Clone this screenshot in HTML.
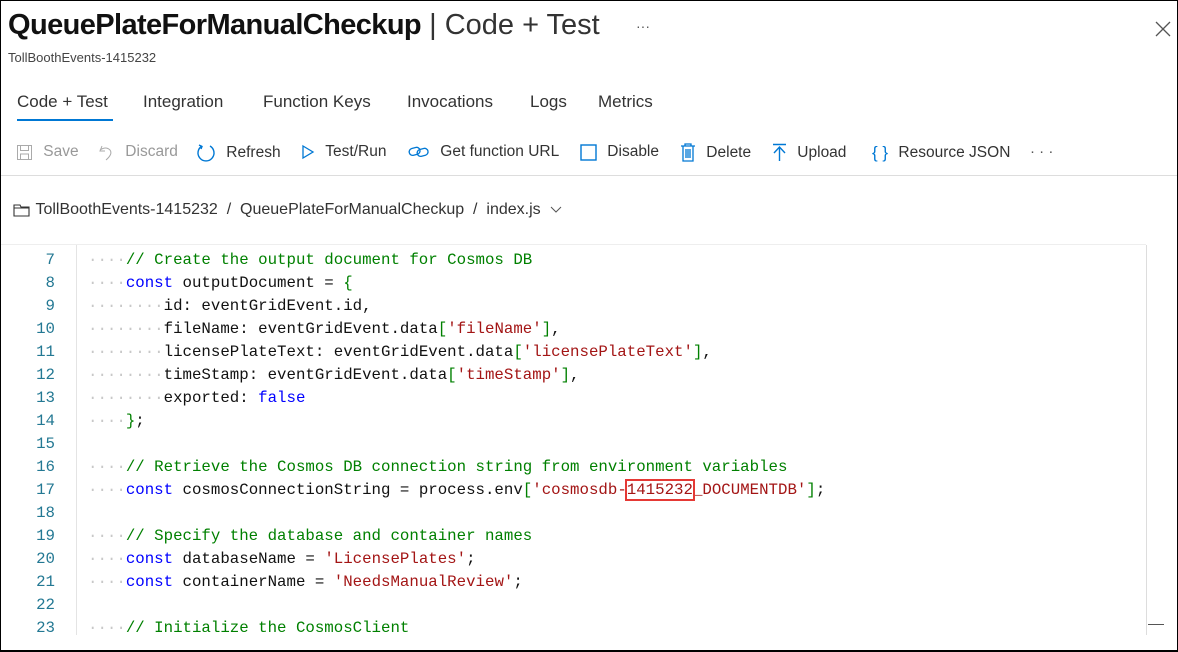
<!DOCTYPE html>
<html><head><meta charset="utf-8"><style>
*{margin:0;padding:0;box-sizing:border-box}
body{width:1178px;height:652px;overflow:hidden;background:#fff;font-family:"Liberation Sans",sans-serif;color:#222;position:relative}
.frame{position:absolute;left:0;top:0;width:1178px;height:652px;border:1px solid #000;border-bottom:2px solid #000}
.abs{position:absolute;white-space:nowrap}
.title{left:8px;top:9px;font-size:29px;letter-spacing:-0.6px}
.title b{font-weight:bold;color:#111}
.title span{font-weight:normal;color:#333;letter-spacing:0}
.sub{left:8px;top:50px;font-size:13px;color:#444}
.tabs{top:92px;font-size:17px;color:#333}
.tb{top:143px;font-size:15.5px;color:#333;display:flex;align-items:center;gap:6px}
.dis{color:#999}
.ico{color:#0078d4}
.code{font-family:"Liberation Mono",monospace;font-size:15.75px;position:absolute;left:88px;white-space:pre;line-height:23px;color:#111}
.ln{font-family:"Liberation Mono",monospace;font-size:15.75px;position:absolute;right:1123px;line-height:23px;color:#237893;text-align:right}
.d{color:#c8c8c8}
.c{color:#008000}
.k{color:#0000ff}
.s{color:#a31515}
</style></head><body>
<div class="abs title"><b>QueuePlateForManualCheckup</b><span> | Code + Test</span></div>
<div class="abs" style="left:636px;top:18px;font-size:14px;color:#555">···</div>
<svg class="abs" style="left:1155px;top:21px" width="16" height="16"><path d="M1 1L15 15M15 1L1 15" stroke="#555" stroke-width="1.3"/></svg>
<div class="abs sub">TollBoothEvents-1415232</div>
<div class="abs tabs" style="left:17px">Code + Test</div>
<div class="abs" style="left:17px;top:119px;width:96px;height:2px;background:#0078d4"></div>
<div class="abs tabs" style="left:143px">Integration</div>
<div class="abs tabs" style="left:263px">Function Keys</div>
<div class="abs tabs" style="left:407px">Invocations</div>
<div class="abs tabs" style="left:530px">Logs</div>
<div class="abs tabs" style="left:598px">Metrics</div>

<div class="abs tb dis" style="left:16px"><svg width="17" height="17"><rect x="1.5" y="1.5" width="14" height="14" fill="none" stroke="#aaa"/><rect x="4.5" y="1.5" width="8" height="5" fill="none" stroke="#aaa"/><rect x="4.5" y="10" width="8" height="5.5" fill="none" stroke="#aaa"/></svg>&nbsp;Save</div>
<div class="abs tb dis" style="left:98px"><svg width="17" height="17"><path d="M4 2L2 7L7 7M2 6Q8 2 12 6Q15 10 8 16" fill="none" stroke="#aaa"/></svg>&nbsp;Discard</div>
<div class="abs tb" style="left:196px"><svg width="20" height="20"><path d="M6 3A8 8 0 1 0 14 3" fill="none" stroke="#0078d4" stroke-width="1.4"/><path d="M3 2L6 3.5L5 6" fill="none" stroke="#0078d4" stroke-width="1.4"/></svg>&nbsp;Refresh</div>
<div class="abs tb" style="left:301px"><svg width="14" height="16"><path d="M2 2L12 8L2 14Z" fill="none" stroke="#0078d4" stroke-width="1.3"/></svg>&nbsp;Test/Run</div>
<div class="abs tb" style="left:408px"><svg width="22" height="14"><rect x="1" y="3" width="11" height="7" rx="3.5" fill="none" stroke="#0078d4" stroke-width="1.3" transform="rotate(-15 6 6)"/><rect x="9" y="4" width="11" height="7" rx="3.5" fill="none" stroke="#0078d4" stroke-width="1.3" transform="rotate(-15 14 7)"/></svg>&nbsp;Get function URL</div>
<div class="abs tb" style="left:580px"><svg width="17" height="17"><rect x="1" y="1" width="15" height="15" fill="none" stroke="#0078d4" stroke-width="1.4"/></svg>&nbsp;Disable</div>
<div class="abs tb" style="left:680px"><svg width="16" height="19"><path d="M1 3H15M5 3V1H11V3M3 3V18H13V3M6 6V15M8 6V15M10 6V15" fill="none" stroke="#0078d4" stroke-width="1.3"/></svg>&nbsp;Delete</div>
<div class="abs tb" style="left:772px"><svg width="15" height="19"><path d="M1 1.5H14M7.5 4V18M2 10L7.5 4L13 10" fill="none" stroke="#0078d4" stroke-width="1.4"/></svg>&nbsp;Upload</div>
<div class="abs tb" style="left:872px"><span class="ico" style="font-size:17px">{ }</span>&nbsp;Resource JSON</div>
<div class="abs" style="left:1030px;top:143px;font-size:15px;color:#555">· · ·</div>
<div class="abs" style="left:0;top:175px;width:1178px;height:1px;background:#ddd"></div>

<div class="abs" style="left:13px;top:201px;font-size:16px;color:#333;display:flex;align-items:center"><svg width="18" height="14"><path d="M1 2H7L8 4H16V13H1Z M1 5H16" fill="none" stroke="#333" stroke-width="1.1"/></svg>&nbsp;TollBoothEvents-1415232 &nbsp;/ &nbsp;QueuePlateForManualCheckup &nbsp;/ &nbsp;index.js &nbsp;<svg width="12" height="8"><path d="M1 1L6 6L11 1" fill="none" stroke="#555"/></svg></div>

<div class="abs" style="left:0;top:244px;width:1146px;height:1px;background:#eee"></div>
<div class="abs" style="left:76px;top:245px;width:1px;height:390px;background:#e4e4e4"></div>
<div class="abs" style="left:1146px;top:245px;width:1px;height:390px;background:#ddd"></div>
<div class="abs" style="left:1148px;top:624px;width:16px;height:1px;background:#555"></div>

<div class="ln" style="top:249px">7<br>8<br>9<br>10<br>11<br>12<br>13<br>14<br>15<br>16<br>17<br>18<br>19<br>20<br>21<br>22<br>23</div>
<div class="code" style="top:249px"><span class="d">····</span><span class="c">// Create the output document for Cosmos DB</span>
<span class="d">····</span><span class="k">const</span> outputDocument = <span class="c">{</span>
<span class="d">········</span>id: eventGridEvent.id,
<span class="d">········</span>fileName: eventGridEvent.data<span class="c">[</span><span class="s">'fileName'</span><span class="c">]</span>,
<span class="d">········</span>licensePlateText: eventGridEvent.data<span class="c">[</span><span class="s">'licensePlateText'</span><span class="c">]</span>,
<span class="d">········</span>timeStamp: eventGridEvent.data<span class="c">[</span><span class="s">'timeStamp'</span><span class="c">]</span>,
<span class="d">········</span>exported: <span class="k">false</span>
<span class="d">····</span><span class="c">}</span>;

<span class="d">····</span><span class="c">// Retrieve the Cosmos DB connection string from environment variables</span>
<span class="d">····</span><span class="k">const</span> cosmosConnectionString = process.env<span class="c">[</span><span class="s">'cosmosdb-<span style="outline:2px solid #e53935;outline-offset:0">1415232</span>_DOCUMENTDB'</span><span class="c">]</span>;

<span class="d">····</span><span class="c">// Specify the database and container names</span>
<span class="d">····</span><span class="k">const</span> databaseName = <span class="s">'LicensePlates'</span>;
<span class="d">····</span><span class="k">const</span> containerName = <span class="s">'NeedsManualReview'</span>;

<span class="d">····</span><span class="c">// Initialize the CosmosClient</span></div>
<div class="frame"></div>
</body></html>
